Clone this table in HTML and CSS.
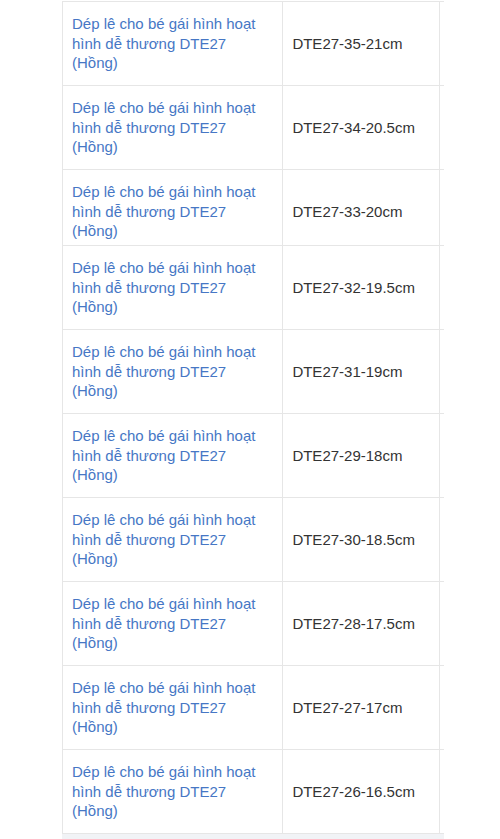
FILE: index.html
```html
<!DOCTYPE html>
<html lang="vi">
<head>
<meta charset="utf-8">
<link rel="stylesheet" href="styles.css">
</head>
<body>
<div class="wrap">
  <div class="scroller">
    <table class="sizes">
      <tbody>
        <tr><td class="name"><a href="#">Dép lê cho bé gái hình hoạt hình dễ thương DTE27 (Hồng)</a></td><td class="code">DTE27-35-21cm</td><td class="extra"></td></tr>
        <tr><td class="name"><a href="#">Dép lê cho bé gái hình hoạt hình dễ thương DTE27 (Hồng)</a></td><td class="code">DTE27-34-20.5cm</td><td class="extra"></td></tr>
        <tr class="short"><td class="name"><a href="#">Dép lê cho bé gái hình hoạt hình dễ thương DTE27 (Hồng)</a></td><td class="code">DTE27-33-20cm</td><td class="extra"></td></tr>
        <tr><td class="name"><a href="#">Dép lê cho bé gái hình hoạt hình dễ thương DTE27 (Hồng)</a></td><td class="code">DTE27-32-19.5cm</td><td class="extra"></td></tr>
        <tr><td class="name"><a href="#">Dép lê cho bé gái hình hoạt hình dễ thương DTE27 (Hồng)</a></td><td class="code">DTE27-31-19cm</td><td class="extra"></td></tr>
        <tr><td class="name"><a href="#">Dép lê cho bé gái hình hoạt hình dễ thương DTE27 (Hồng)</a></td><td class="code">DTE27-29-18cm</td><td class="extra"></td></tr>
        <tr><td class="name"><a href="#">Dép lê cho bé gái hình hoạt hình dễ thương DTE27 (Hồng)</a></td><td class="code">DTE27-30-18.5cm</td><td class="extra"></td></tr>
        <tr><td class="name"><a href="#">Dép lê cho bé gái hình hoạt hình dễ thương DTE27 (Hồng)</a></td><td class="code">DTE27-28-17.5cm</td><td class="extra"></td></tr>
        <tr><td class="name"><a href="#">Dép lê cho bé gái hình hoạt hình dễ thương DTE27 (Hồng)</a></td><td class="code">DTE27-27-17cm</td><td class="extra"></td></tr>
        <tr><td class="name"><a href="#">Dép lê cho bé gái hình hoạt hình dễ thương DTE27 (Hồng)</a></td><td class="code">DTE27-26-16.5cm</td><td class="extra"></td></tr>
      </tbody>
    </table>
  </div>
  <div class="track"></div>
</div>
</body>
</html>
```
FILE: styles.css
```css
html, body {
  margin: 0;
  padding: 0;
  background: #fff;
}
body {
  font-family: "Liberation Sans", Arial, sans-serif;
  font-size: 15px;
  color: #333;
}
.wrap {
  width: 382px;
  margin-left: 62px;
  padding-top: 1px;
}
.scroller {
  width: 382px;
  overflow: hidden;
}
.sizes {
  border-collapse: separate;
  border-spacing: 0;
  table-layout: fixed;
  width: 578px;
  border-top: 1px solid #e6e6e6;
  border-left: 1px solid #e6e6e6;
}
.sizes td {
  box-sizing: border-box;
  height: 84px;
  padding: 12px 10px 12px 9px;
  vertical-align: middle;
  border-right: 1px solid #e6e6e6;
  border-bottom: 1px solid #e6e6e6;
  line-height: 19.5px;
}
.sizes tr.short td {
  height: 76px;
  padding-bottom: 4px;
}
.sizes td.name {
  width: 220px;
}
.sizes td.name a {
  color: #4677c5;
  text-decoration: none;
}
.sizes td.code {
  width: 156px;
  color: #333;
}
.sizes td.extra {
  width: 200px;
}
.track {
  height: 8px;
  background: #f1f3f6;
}
```
